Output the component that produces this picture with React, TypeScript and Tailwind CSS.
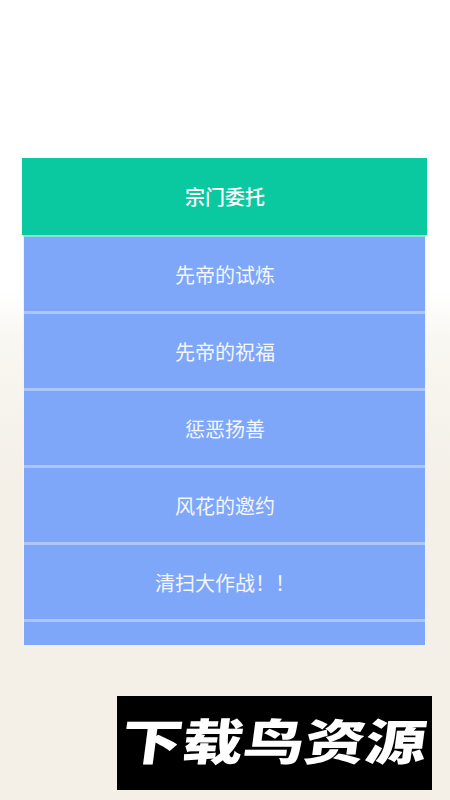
const quests = ["先帝的试炼", "先帝的祝福", "惩恶扬善", "风花的邀约", "清扫大作战！！"];

export default function App() {
  return (
    <div className="h-[800px] w-[450px] overflow-hidden bg-[linear-gradient(to_bottom,#ffffff_0px,#ffffff_290px,#f9f7f1_340px,#f4f0e8_480px,#f4f0e8_800px)] pt-[158px] font-['Noto_Sans_CJK_SC',sans-serif]">
      <div className="ml-[22px] flex w-[405px] flex-col">
        <div className="flex h-[77px] items-center justify-center bg-[#0ac8a0] pl-px text-[20px] font-medium text-white">
          宗门委托
        </div>
        <div className="mx-px flex h-[411px] flex-col overflow-hidden border-x border-b border-x-[#eef3fd] border-b-[#eef3fd] border-t-2 border-t-[#8fdcdc] bg-[#7ea7f9]">
          {quests.map((quest) => (
            <div
              key={quest}
              className="flex h-[77px] shrink-0 items-center justify-center border-b-[3px] border-[#adc6fb] pl-px pt-px text-[20px] text-[#f3f6fe]"
            >
              {quest}
            </div>
          ))}
          <div className="h-[24px] shrink-0" />
        </div>
      </div>
      <div className="ml-[117px] mt-[50px] flex h-[94px] w-[315px] items-center justify-center bg-black pb-[10px]">
        <span className="-skew-x-6 scale-y-[0.8] whitespace-nowrap text-[61px] leading-none font-black text-white">
          下载鸟资源
        </span>
      </div>
    </div>
  );
}
